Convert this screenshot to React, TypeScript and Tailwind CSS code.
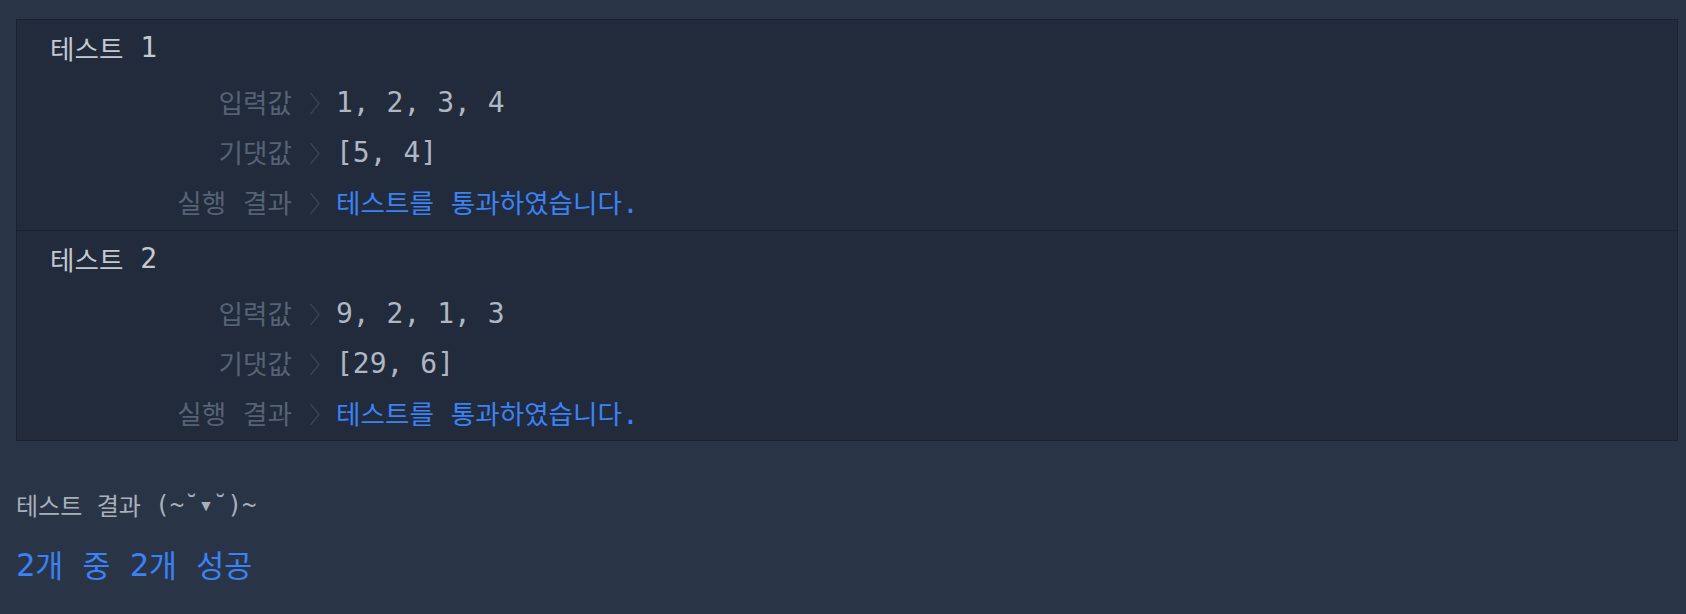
import React from 'react';

type Row = { label: string; value: string; pass?: boolean };
type Case = { title: string; rows: Row[] };

const cases: Case[] = [
    {
        title: '테스트 1',
        rows: [
            { label: '입력값', value: '1, 2, 3, 4' },
            { label: '기댓값', value: '[5, 4]' },
            { label: '실행 결과', value: '테스트를 통과하였습니다.', pass: true },
        ],
    },
    {
        title: '테스트 2',
        rows: [
            { label: '입력값', value: '9, 2, 1, 3' },
            { label: '기댓값', value: '[29, 6]' },
            { label: '실행 결과', value: '테스트를 통과하였습니다.', pass: true },
        ],
    },
];

// Hangul runs get their own size so they keep the advance of the original font
const Mixed: React.FC<{ text: string; wide?: boolean }> = ({ text, wide }) => {
    const parts = text.split(/([\uAC00-\uD7A3]+)/);
    return (
        <>
            {parts.map((p, i) =>
                /[\uAC00-\uD7A3]/.test(p) ? (
                    <span
                        key={i}
                        className={
                            wide
                                ? "text-[1em] font-['Noto_Sans_CJK_KR',sans-serif]"
                                : "text-[0.95em] font-['Noto_Sans_CJK_KR',sans-serif]"
                        }
                    >
                        {p}
                    </span>
                ) : (
                    <span key={i}>{p}</span>
                )
            )}
        </>
    );
};

const Chevron: React.FC = () => (
    <svg width="12" height="23" viewBox="0 0 12 23" className="shrink-0">
        <path d="M1.5 1 L10 11.5 L1.5 22" fill="none" stroke="#384354" strokeWidth="1.4" />
    </svg>
);

const App: React.FC = () => {
    return (
        <div className="min-h-screen bg-[#293546] pt-[19px] pl-4 pr-[8px] font-['DejaVu_Sans_Mono','Noto_Sans_CJK_KR',monospace]">
            <div className="bg-[#222b3b] border border-[#1b2130]">
                {cases.map((c, idx) => (
                    <div
                        key={c.title}
                        className={idx === 0 ? 'pt-[8px] pb-[2px] border-b border-[#1b2130]' : 'pt-[8px] pb-[1px]'}
                    >
                        <div className="h-10 flex items-center pl-[33px] text-[28px] text-[#c3c9d2] whitespace-pre">
                            <Mixed text={c.title} />
                        </div>
                        <div className="mt-[10px]">
                            {c.rows.map((r) => (
                                <div key={r.label} className="h-[50px] flex items-center text-[28px] whitespace-pre">
                                    <div className="w-[275px] text-right text-[#566275]">
                                        <Mixed text={r.label} />
                                    </div>
                                    <div className="ml-[17px]">
                                        <Chevron />
                                    </div>
                                    <div className={r.pass ? 'ml-[15px] text-[#3b82f6]' : 'ml-[15px] text-[#aeb7c3]'}>
                                        <Mixed text={r.value} />
                                    </div>
                                </div>
                            ))}
                        </div>
                    </div>
                ))}
            </div>
            <div className="mt-[48px] h-8 flex items-center text-[24px] text-[#a8b0bc] whitespace-pre">
                <Mixed text="테스트 결과 (~˘▾˘)~" wide />
            </div>
            <div className="mt-[22px] h-11 flex items-center text-[32px] text-[#3b82f6] whitespace-pre">
                <Mixed text="2개 중 2개 성공" />
            </div>
        </div>
    );
};

export default App;
